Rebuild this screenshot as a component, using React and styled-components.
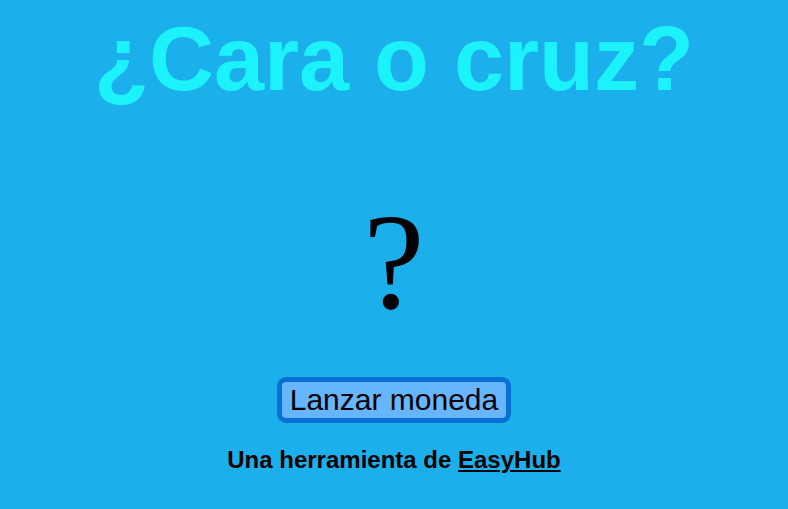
import React from "react"
import styled, { createGlobalStyle } from "styled-components"

const GlobalStyle = createGlobalStyle`
	html, body {
		margin: 0;
		padding: 0;
		background: #1bb0ec;
	}
	body {
		font-family: "Liberation Sans", Arial, sans-serif;
	}
`

const Page = styled.div`
	display: flex;
	flex-direction: column;
	align-items: center;
	height: 509px;
	text-align: center;
`

const Title = styled.h1`
	margin: 0;
	padding-top: 9px;
	font-size: 90px;
	font-weight: 700;
	line-height: 100px;
	color: #1cf2fb;
`

const Coin = styled.div`
	margin: 73px 0 0;
	font-family: "Liberation Serif", "Times New Roman", serif;
	font-size: 138px;
	line-height: 159px;
	color: #000;
`

const FlipButton = styled.button`
	margin-top: 36px;
	padding: 1px 8px 1px;
	font-family: "Liberation Sans", Arial, sans-serif;
	font-size: 30px;
	line-height: 34px;
	color: #000;
	background: #66b5ff;
	border: 5px solid #0b6fd5;
	border-radius: 9px;
	cursor: pointer;
`

const Credit = styled.p`
	margin: 23px 0 0;
	font-size: 24px;
	font-weight: 700;
	color: #000;

	a {
		color: #000;
		text-decoration: underline;
	}
`

export default function App() {
	return (
		<>
			<GlobalStyle />
			<Page>
				<Title>¿Cara o cruz?</Title>
				<Coin>?</Coin>
				<FlipButton>Lanzar moneda</FlipButton>
				<Credit>
					Una herramienta de <a href="#">EasyHub</a>
				</Credit>
			</Page>
		</>
	)
}
